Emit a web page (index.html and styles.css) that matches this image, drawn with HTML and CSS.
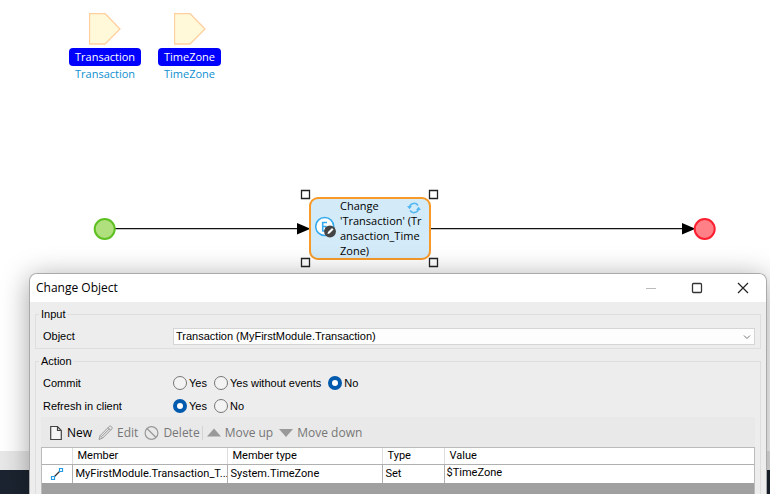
FILE: index.html
```html
<!DOCTYPE html>
<html lang="en">
<head>
<meta charset="utf-8">
<title>Change Object</title>
<link rel="stylesheet" href="styles.css">
</head>
<body>
<main class="canvas">
  <div class="param param-first">
    <svg width="32" height="32" viewBox="0 0 32 32" aria-hidden="true"><path d="M.5.5H16L31 16 16 31H.5z" fill="#fff8d9" stroke="#ffcf9e" stroke-width="1.3"/></svg>
    <span class="param-name">Transaction</span>
    <span class="param-type">Transaction</span>
  </div>
  <div class="param param-second">
    <svg width="32" height="32" viewBox="0 0 32 32" aria-hidden="true"><path d="M.5.5H16L31 16 16 31H.5z" fill="#fff8d9" stroke="#ffcf9e" stroke-width="1.3"/></svg>
    <span class="param-name">TimeZone</span>
    <span class="param-type">TimeZone</span>
  </div>
  <svg class="flow" width="770" height="100" viewBox="0 180 770 100" aria-hidden="true">
    <path d="M115 228.700H300M431 228.700H685" stroke="#111" stroke-width="1.300"/>
    <path d="M297 223l13.500 5.700-13.500 5.800zM682 223l13.500 5.700-13.500 5.800z" fill="#000"/>
    <circle cx="104.700" cy="229" r="10" fill="#b0df7e" stroke="#5ec122" stroke-width="2"/>
    <circle cx="704.700" cy="229" r="10" fill="#ff8087" stroke="#fb1f2f" stroke-width="2"/>
    <path d="M301.500 190.500h8v8h-8zM429.500 190.500h8v8h-8zM301.500 258.500h8v8h-8zM429.500 258.500h8v8h-8z" fill="#fff" stroke="#222" stroke-width="1.300"/>
  </svg>
  <div class="activity">
    <svg class="activity-icon" width="24" height="24" viewBox="0 0 24 24" aria-hidden="true">
      <circle cx="9.700" cy="10.500" r="9" fill="#fff" stroke="#35a9ee" stroke-width="1.500"/>
      <path d="M12 6.500H7.700v9M7.700 10.500h4M7.700 15h4" fill="none" stroke="#35a9ee" stroke-width="1.600"/>
      <circle cx="15" cy="15.500" r="5.900" fill="#444"/>
      <path d="M12.500 18l.5-2 4-4 1.500 1.500-4 4z" fill="#fff"/>
    </svg>
    <span class="activity-text">Change<br>'Transaction' (Tr<br>ansaction_Time<br>Zone)</span>
    <svg class="activity-refresh" width="14" height="12" viewBox="0 0 14 12" aria-hidden="true">
      <path d="M2.500 5A4.700 4.700 0 0 1 11 3.500M11.500 7A4.700 4.700 0 0 1 3 8.500" fill="none" stroke="#55b7f2" stroke-width="1.500"/>
      <path d="M0 4h5L2.500 7.200zM9 8h5l-2.500-3.200z" fill="#55b7f2"/>
    </svg>
  </div>
  <div class="status-strip"></div>
  <div class="status-bar"></div>
</main>

<section class="dialog" role="dialog" aria-labelledby="dialog-title">
  <header class="titlebar">
    <h1 id="dialog-title">Change Object</h1>
    <button type="button" class="window-button" aria-label="Minimize" disabled><svg width="12" height="12" viewBox="0 0 12 12"><path d="M1 6.500h10" stroke="#bbb"/></svg></button>
    <button type="button" class="window-button" aria-label="Maximize"><svg width="12" height="12" viewBox="0 0 12 12"><rect x="1.500" y="1.500" width="9" height="9" rx="1" fill="none" stroke="#333" stroke-width="1.300"/></svg></button>
    <button type="button" class="window-button" aria-label="Close"><svg width="12" height="12" viewBox="0 0 12 12"><path d="M1 1l10 10M11 1L1 11" stroke="#222" stroke-width="1.200"/></svg></button>
  </header>
  <form class="content">
    <fieldset class="group input-group">
      <legend>Input</legend>
      <div class="row">
        <label class="row-label" for="object">Object</label>
        <div class="select-wrap">
          <select id="object"><option>Transaction (MyFirstModule.Transaction)</option></select>
          <svg class="chevron" width="8" height="6" viewBox="0 0 8 6" aria-hidden="true"><path d="M1 1.500l3 3 3-3" fill="none" stroke="#777"/></svg>
        </div>
      </div>
    </fieldset>
    <fieldset class="group action-group">
      <legend>Action</legend>
      <div class="row" role="radiogroup" aria-labelledby="commit-label">
        <span class="row-label" id="commit-label">Commit</span>
        <label class="choice"><input type="radio" name="commit">Yes</label>
        <label class="choice"><input type="radio" name="commit">Yes without events</label>
        <label class="choice"><input type="radio" name="commit" checked>No</label>
      </div>
      <div class="row" role="radiogroup" aria-labelledby="refresh-label">
        <span class="row-label" id="refresh-label">Refresh in client</span>
        <label class="choice"><input type="radio" name="refresh" checked>Yes</label>
        <label class="choice"><input type="radio" name="refresh">No</label>
      </div>
      <div class="toolbar">
        <button type="button" class="tool"><svg width="14" height="16" viewBox="0 0 14 16"><path d="M1.700 1.500h6.800l3.800 4v9H1.700zM8.500 1.500v4h3.800" fill="#f6f6f6" stroke="#444" stroke-width="1.200"/></svg>New</button>
        <button type="button" class="tool" disabled><svg width="15" height="16" viewBox="0 0 15 16"><path d="M1 14.500l1.200-4L11.500 1.200q1-.5 2 .5t.5 2L4.700 13zM2.200 10.500L4.700 13M10 2.700l2.500 2.500M3.700 11.500l8-8" fill="none" stroke="#999"/></svg>Edit</button>
        <button type="button" class="tool" disabled><svg width="15" height="16" viewBox="0 0 15 16"><circle cx="7.500" cy="8" r="6.400" fill="none" stroke="#999" stroke-width="1.200"/><path d="M3 3.500l9 9" stroke="#999" stroke-width="1.200"/></svg>Delete</button>
        <span class="separator"></span>
        <button type="button" class="tool" disabled><svg width="14" height="16" viewBox="0 0 14 16"><path d="M7 3.500l7 8H0z" fill="#999"/></svg>Move up</button>
        <button type="button" class="tool" disabled><svg width="14" height="16" viewBox="0 0 14 16"><path d="M7 12l7-8H0z" fill="#999"/></svg>Move down</button>
      </div>
      <div class="grid">
        <table>
          <colgroup><col class="col-icon"><col class="col-member"><col class="col-member"><col class="col-type"><col></colgroup>
          <thead><tr><th aria-label="Kind"></th><th>Member</th><th>Member type</th><th>Type</th><th>Value</th></tr></thead>
          <tbody><tr>
            <td class="kind"><svg width="14" height="14" viewBox="0 0 14 14" aria-hidden="true"><path d="M4 10l6-6" stroke="#333" stroke-width="1.200"/><path d="M9.500 1.500h3v3h-3zM1.500 9.500h3v3h-3z" fill="#fff" stroke="#229be5" stroke-width="1.200"/></svg></td>
            <td>MyFirstModule.Transaction_T...</td><td>System.TimeZone</td><td>Set</td><td class="value">$TimeZone</td>
          </tr></tbody>
        </table>
      </div>
    </fieldset>
  </form>
</section>
</body>
</html>
```
FILE: styles.css
```css
* { box-sizing: border-box; }

body {
  margin: 0;
  min-height: 100vh;
  overflow: hidden;
  background: #fff;
  color: #000;
  font: 11px/14px "Liberation Sans", Arial, sans-serif;
}

svg { display: block; flex: none; }

button { margin: 0; border: 0; background: none; font: inherit; color: inherit; }

/* Microflow canvas */
.canvas {
  position: absolute;
  inset: 0;
  overflow: hidden;
  font: 11px/15px "Open Sans", "Noto Sans", sans-serif;
}

.param {
  position: absolute;
  top: 13px;
  display: flex;
  flex-direction: column;
  align-items: center;
}

.param-first { left: 69px; }
.param-second { left: 158px; }

.param-name {
  margin-top: 3px;
  padding: 1px 6px 2px;
  border-radius: 4px;
  background: #0000fe;
  color: #fff;
}

.param-type { color: #0d8fd0; }

.flow { position: absolute; top: 180px; left: 0; width: 770px; }

.activity {
  position: absolute;
  top: 197px;
  left: 309px;
  display: flex;
  align-items: center;
  width: 122px;
  height: 63px;
  padding: 0 0 2px 4px;
  border: 2px solid #f79a28;
  border-radius: 9px;
  background: #d3ebf8;
}

.activity-text { margin-left: 1px; white-space: nowrap; }

.activity-refresh { position: absolute; top: 3px; right: 8px; }

.status-strip {
  position: absolute;
  inset: 451px 0 0;
  background: #e8e8e8;
}

.status-bar {
  position: absolute;
  inset: 470px 0 0;
  background: #1b2430;
}

/* Dialog */
.dialog {
  position: absolute;
  inset: 273px 3px 0 29px;
  display: flex;
  flex-direction: column;
  overflow: hidden;
  border: 1px solid #aaa;
  border-bottom: 0;
  border-radius: 8px 8px 0 0;
  background: #ededed;
  box-shadow: 0 4px 28px rgba(0, 0, 0, 0.36);
}

.titlebar {
  display: flex;
  flex: none;
  align-items: center;
  height: 28px;
  padding-left: 6px;
  background: #fff;
}

.titlebar h1 {
  flex: 1;
  margin: 0;
  font: 12px/16px "Open Sans", "Noto Sans", sans-serif;
}

.window-button {
  display: flex;
  align-items: center;
  justify-content: center;
  width: 46px;
  height: 28px;
  padding: 0;
}

.content {
  display: flex;
  flex: 1;
  flex-direction: column;
  gap: 5px;
  padding: 5px 5px 0;
}

.group {
  min-width: 0;
  margin: 0;
  padding: 0 5px;
  border: 1px solid #dedede;
}

.group legend { margin-left: -2px; padding: 0 2px; }

.input-group { padding-top: 3px; }

.action-group { flex: 1; padding-top: 3px; border-bottom: 0; }

.row {
  display: flex;
  align-items: center;
  height: 23px;
}

.input-group .row { height: 24px; }

.row-label { flex: none; width: 132px; padding-left: 2px; }

.select-wrap { position: relative; flex: 1; }

.select-wrap select {
  display: block;
  width: 100%;
  height: 17px;
  padding: 0 2px;
  appearance: none;
  border: 1px solid #d5d5d5;
  border-radius: 0;
  background: #fdfdfd;
  color: #000;
  font: inherit;
}

.chevron { position: absolute; top: 6px; right: 4px; }

.choice {
  display: flex;
  align-items: center;
  gap: 2px;
  margin-right: 7px;
}

.choice input {
  width: 14px;
  height: 14px;
  margin: 0;
  appearance: none;
  border: 1px solid #777;
  border-radius: 50%;
  background: #f3f3f3;
}

.choice input:checked { border: 4px solid #005aad; background: #fff; }

.toolbar {
  display: flex;
  align-items: center;
  height: 30px;
  padding: 2px 0 0 8px;
  background: #e9e9e9;
  font: 12px/16px "Open Sans", "Noto Sans", sans-serif;
}

.tool {
  display: flex;
  align-items: center;
  gap: 4px;
  margin-right: 6px;
  padding: 0;
}

.tool:disabled { color: #777; }

.separator { width: 1px; height: 14px; margin-left: -4px; margin-right: 4px; background: #d4d4d4; }

.grid {
  border: 1px solid #bbb;
  border-bottom: 0;
  padding-bottom: 11px;
  background: #a0a0a0;
}

table {
  width: 100%;
  table-layout: fixed;
  border-collapse: collapse;
  background: #fff;
}

.col-icon { width: 30px; }
.col-member { width: 155px; }
.col-type { width: 62px; }

th, td {
  overflow: hidden;
  border-right: 1px solid #b0b0b0;
  text-align: left;
  white-space: nowrap;
}

th {
  height: 16px;
  padding: 0 5px;
  border-right-color: #ddd;
  border-bottom: 1px solid #b0b0b0;
  font: 11px/15px Roboto, "Open Sans", sans-serif;
}

td {
  height: 19px;
  padding: 1px 3px 0;
  font: 11px/16px Roboto, "Open Sans", sans-serif;
}

th:last-child, td:last-child { border-right: 0; }

.kind { padding: 0 8px; }

td.value { padding: 0 2px 2px; }
```
